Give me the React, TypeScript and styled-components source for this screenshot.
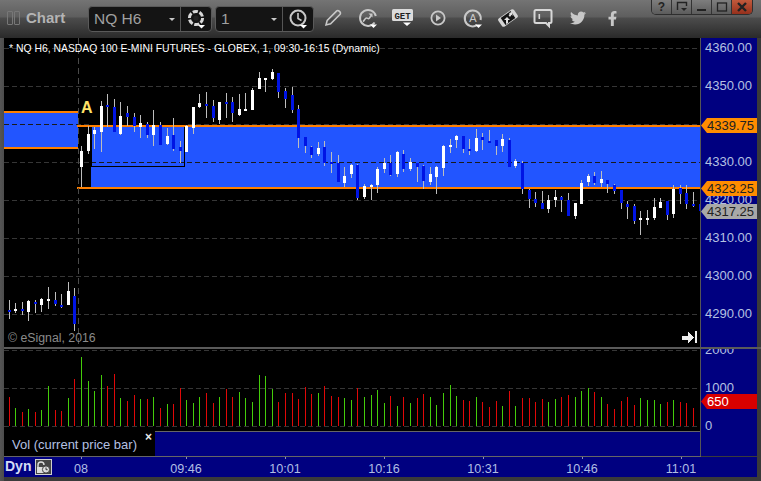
import React from "react";
import styled, { createGlobalStyle } from "styled-components";
import { FaTwitter, FaFacebookF } from "react-icons/fa";

const Global = createGlobalStyle`
  html, body { margin: 0; padding: 0; background: #3a3a3a; overflow: hidden; }
  * { box-sizing: border-box; }
`;

const Root = styled.div`
  width: 761px; height: 481px; display: flex; flex-direction: column;
  background: linear-gradient(90deg, #555 0, #4c4c4c 4px, #3a3a3a 4px);
  font-family: "Liberation Sans", Arial, sans-serif; overflow: hidden;
`;
const Toolbar = styled.div`
  height: 38px; flex: none; display: flex; align-items: flex-start; padding: 6px 8px 0 7px;
  background: linear-gradient(180deg, #747474 0, #5e5e5e 17px, #4c4c4c 18px, #2a2a2a 38px);
`;
const Grip = styled.div`
  width: 6px; height: 14px; margin: 5px 1px 0 0; border: 1px solid #777; border-radius: 1px;
`;
const Title = styled.div`
  width: 62px; margin-left: 5px; margin-top: 3px; color: #b4b4b4; font-size: 15px; font-weight: 700; line-height: 18px;
`;
const Combo = styled.div<{ $w: number; $left: number }>`
  width: ${p => p.$w}px; height: 26px; flex: none; margin-left: ${p => p.$left}px; display: flex; align-items: center;
  background: #141414; border: 1px solid #5a5a5a; border-radius: 4px;
`;
const ComboText = styled.div`
  flex: 1; padding-left: 5px; color: #a0a0a0; font-size: 15.5px; line-height: 24px;
`;
const Caret = styled.div`
  width: 0; height: 0; margin-right: 5px; border-left: 3px solid transparent; border-right: 3px solid transparent; border-top: 3px solid #c8c8c8;
`;
const ComboIcon = styled.div`
  width: 31px; height: 24px; flex: none; border-left: 1px solid #555; display: flex; align-items: center; justify-content: center; padding-left: 1px;
`;
const Tools = styled.div`
  display: flex; margin-left: 1px; margin-top: 0;
`;
const Tool = styled.div`
  width: 35px; height: 24px; display: flex; align-items: center; justify-content: center; color: #c8c8c8;
`;
const WinButtons = styled.div`
  margin-left: auto; margin-top: -6px; display: flex; height: 15px; border: 1px solid #2e2e2e; border-top: 0; border-radius: 0 0 5px 5px; overflow: hidden;
`;
const WinButton = styled.div<{ $close?: boolean }>`
  width: 20px; display: flex; align-items: center; justify-content: center; color: #222; font-size: 12px; font-weight: 700;
  background: ${p => p.$close ? "linear-gradient(180deg,#c25a3c,#96301c)" : "linear-gradient(180deg,#7e7e7e,#5c5c5c)"};
  border-right: 1px solid #333;
  &:last-child { border-right: 0; }
`;
const Main = styled.div`
  flex: 1; display: flex; flex-direction: column; padding: 0 4px 4px 4px; min-height: 0;
`;
const Row = styled.div<{ $h: number }>`
  height: ${p => p.$h}px; flex: none; display: flex;
`;
const ChartPane = styled.div`
  width: 696px; height: 309px; flex: none; position: relative; background: #000; overflow: hidden;
  svg { display: block; }
`;
const ChartTitle = styled.div`
  position: absolute; left: 5px; top: 4px; color: #fff; font-size: 10.4px; line-height: 13px; white-space: nowrap;
`;
const Copyright = styled.div`
  position: absolute; left: 4px; top: 293px; color: #8a8a8a; font-size: 12.3px; line-height: 14px; white-space: nowrap;
`;
const Axis = styled.div<{ $top: number }>`
  flex: 1; background: #000080; border-left: 1px solid #555; position: relative; overflow: hidden; padding: ${p => Math.max(p.$top, 0)}px 0 0 4px;
  display: flex; flex-direction: column; gap: 18px;
  & > :first-child { margin-top: ${p => Math.min(p.$top, 0)}px; }
`;
const AxisTick = styled.div`
  height: 20px; flex: none; line-height: 20px; color: #b4c0e2; font-size: 13px; white-space: nowrap;
`;
const Badge = styled.div<{ $top: number; $bg: string; $fg: string }>`
  position: absolute; left: 0; top: ${p => p.$top}px; height: 15px; right: 0; padding-left: 6px; line-height: 15px;
  color: ${p => p.$fg}; font-size: 13px; background: ${p => p.$bg};
  clip-path: polygon(0 50%, 6px 0, 100% 0, 100% 100%, 6px 100%);
`;
const Separator = styled.div`
  height: 2px; flex: none; background: #5a5a5a; margin-right: -4px;
`;
const VolColumn = styled.div`
  width: 696px; flex: none; display: flex; flex-direction: column; background: #000;
  svg { display: block; }
`;
const Legend = styled.div`
  height: 25px; flex: none; display: flex;
`;
const LegendLabel = styled.div`
  width: 151px; flex: none; position: relative; padding-left: 8px; color: #b4c0e2; font-size: 13px; line-height: 28px; white-space: nowrap;
`;
const LegendClose = styled.span`
  position: absolute; right: 3px; top: 0; color: #e8e8e8; font-size: 12px; font-weight: 700; line-height: 12px;
`;
const LegendFill = styled.div`
  flex: 1; background: #000080; border-top: 1px solid #666;
`;
const TimeRule = styled.div`
  width: 697px; height: 1px; flex: none; background: #666;
`;
const TimeRow = styled.div`
  flex: 1; display: flex; background: #000080; overflow: hidden;
`;
const Dyn = styled.div`
  width: 48px; flex: none; display: flex; align-items: flex-start; padding: 1px 0 0 1px; gap: 4px;
  color: #d4dcf4; font-size: 14px; font-weight: 700; line-height: 16px;
`;
const LockBox = styled.div`
  width: 17px; height: 16px; margin-top: 1px; flex: none; background: #444; border: 1px solid #cfcfcf; display: flex; align-items: center; justify-content: center;
`;
const TimeTick = styled.div<{ $w?: number; $ml?: number }>`
  width: ${p => p.$w ?? 99}px; margin-left: ${p => p.$ml ?? 0}px; flex: none; position: relative; text-align: center;
  color: #b0bee4; font-size: 12.6px; line-height: 22px; padding-top: 1px;
  &::before { content: ""; position: absolute; left: 50%; top: 0; width: 1px; height: 2px; background: #8a8fb8; }
`;

type C = [number, number, number, number, number, 0 | 1];
const A: C[] = [[244,258,273,321,382,1],[265,197,222,273,282,1],[283,200,210,222,267,1],[304,123,138,216,276,1],[322,102,135,141,201,0],[343,117,141,216,216,0],[361,126,168,222,225,1],[382,138,159,171,198,0],[403,159,171,198,216,0],[421,165,189,201,234,1],[442,186,192,225,234,0],[460,150,195,225,258,1],[481,186,195,255,255,0],[502,204,228,252,255,1],[520,174,225,267,273,0],[541,243,261,273,309,0],[559,195,198,276,276,1],[580,141,141,204,222,1],[598,102,129,141,144,1],[619,96,132,138,174,0],[640,120,138,174,186,0],[658,126,126,180,192,1],[679,99,126,132,174,0],[697,111,126,159,186,0],[718,102,147,165,168,1],[736,99,147,153,153,1]];
const B: C[] = [[7,84,90,150,150,1],[28,36,54,87,87,1],[46,54,54,60,96,1],[67,27,36,57,60,1],[85,39,39,96,114,0],[106,84,93,117,144,0],[127,81,105,150,159,0],[145,135,147,234,264,0],[166,231,231,258,279,0],[184,258,261,285,294,0],[205,246,264,282,288,1],[223,243,261,309,318,0],[244,276,306,312,339,0],[265,285,309,366,366,0],[283,321,348,369,381,1],[304,312,315,342,354,1],[322,312,315,414,420,0],[343,372,378,411,417,1],[364,372,375,381,420,1],[382,321,327,375,399,1],[403,294,309,327,339,1],[421,285,309,345,348,0],[442,273,276,342,351,1],[460,270,282,327,336,0],[481,294,306,327,333,1],[502,309,309,321,366,0],[520,315,318,363,387,0],[541,321,342,366,375,1],[559,318,321,351,402,1],[580,255,258,324,348,1],[601,237,255,261,279,1],[619,225,228,240,264,1],[640,228,228,267,279,0],[658,237,267,273,285,0],[679,207,234,273,276,1],[697,219,231,240,270,0],[718,210,243,249,249,0],[739,240,240,258,285,0]];
const D: C[] = [[7,72,87,108,126,1],[28,84,90,171,171,0],[46,147,153,168,174,1],[67,153,159,237,252,0],[88,237,240,267,294,0],[106,246,267,279,291,0],[127,243,279,297,297,0],[145,255,270,297,309,1],[166,240,261,270,291,1],[184,258,261,270,306,0],[205,249,270,318,318,0],[226,279,279,318,327,1],[244,210,219,282,282,1],[265,192,198,216,228,1],[283,186,198,219,225,0],[304,183,207,219,231,1],[322,210,210,222,249,0],[343,222,225,243,252,0],[364,240,240,279,297,0],[382,273,282,291,327,0],[403,282,288,333,342,0],[421,303,324,330,375,1],[442,300,324,330,345,1],[463,264,291,324,330,1],[481,264,276,294,294,1],[502,273,273,315,330,0],[520,225,237,312,324,1],[541,225,234,251,282,0],[559,225,249,282,297,0],[580,246,282,288,291,0],[601,282,282,303,303,0]];
const E: C[] = [[28,90,120,126,147,0],[46,99,117,123,129,1],[67,96,117,123,135,0],[85,90,93,126,153,1],[106,90,96,102,129,0],[124,84,87,105,126,1],[145,51,87,93,117,1],[166,66,90,102,108,0],[184,72,105,111,114,0],[205,36,63,105,105,1],[223,54,78,162,183,0]];

const candles = [
  ...E.map(c => ({ c, x0: 0, y0: 270 })),
  ...A.map(c => ({ c, x0: 0, y0: 60 })),
  ...B.map(c => ({ c, x0: 250, y0: 60 })),
  ...D.map(c => ({ c, x0: 500, y0: 110 })),
];

type V = [number, number, 0 | 1];
const V1: V[] = [[28,156,0],[46,189,1],[67,201,0],[85,192,1],[106,201,0],[124,195,1],[145,123,1],[166,195,0],[184,198,0],[205,159,1],[223,102,0],[244,36,1],[265,108,1],[283,138,1],[304,90,1],[322,123,0],[343,87,0],[361,159,1],[382,168,0],[403,150,0],[421,162,1],[442,162,0],[460,156,1],[481,189,0],[502,177,1],[520,177,0],[541,129,0],[559,165,1],[580,174,1],[598,156,1],[619,144,0],[640,174,0],[658,156,1],[679,132,0],[697,156,0],[718,141,1],[736,159,1],[757,171,1],[778,90,1]];
const V2: V[] = [[16,93,1],[37,132,1],[55,171,0],[76,144,0],[97,144,0],[115,162,0],[136,126,0],[154,147,0],[175,144,1],[193,123,0],[214,153,0],[235,156,0],[253,159,1],[274,165,1],[292,129,0],[313,156,1],[334,150,1],[352,135,1],[373,174,1],[391,153,0],[412,183,1],[430,156,0],[451,174,1],[472,159,0],[490,147,0],[511,156,1],[529,180,1],[550,144,1],[571,120,1],[589,153,1],[610,165,0],[628,168,0],[649,156,1],[667,171,0],[688,186,0],[709,168,0],[727,183,1],[748,138,0]];
const V3: V[] = [[16,258,1],[37,234,0],[58,234,0],[76,246,0],[97,237,0],[115,246,1],[136,237,1],[154,231,0],[175,225,0],[196,231,1],[214,213,1],[235,204,1],[253,216,0],[274,231,1],[292,252,0],[313,267,0],[334,243,0],[352,231,0],[373,255,0],[391,234,1],[412,240,1],[433,240,1],[451,252,1],[472,246,0],[490,240,1],[511,246,0],[529,249,0],[550,264,0]];
const vols = [
  ...V1.map(v => ({ v, x0: 0, y0: 345 })),
  ...V2.map(v => ({ v, x0: 260, y0: 345 })),
  ...V3.map(v => ({ v, x0: 510, y0: 320 })),
];

const GRID = [48, 86, 124, 162, 200, 238, 276, 314];

const Chart = () => (
  <svg width={696} height={309} viewBox="4 38 696 309" shapeRendering="crispEdges">
    {GRID.map(y => <line key={y} x1={4} x2={700} y1={y + 0.5} y2={y + 0.5} stroke="#363636" strokeDasharray="5 3" />)}
    <rect x={4} y={111} width={74} height={38} fill="#2255ff" />
    <rect x={91} y={125} width={609} height={64} fill="#2255ff" />
    <line x1={4} x2={78} y1={124.5} y2={124.5} stroke="#1a1a1a" strokeDasharray="5 3" />
    <line x1={91} x2={700} y1={162.5} y2={162.5} stroke="#1a1a1a" strokeDasharray="5 3" />
    <rect x={91.5} y={124.5} width={93} height={42} fill="none" stroke="#000" />
    <rect x={4} y={111} width={74} height={2} fill="#ff8000" />
    <rect x={4} y={147} width={74} height={2} fill="#ff8000" />
    <rect x={77} y={125} width={623} height={2} fill="#ff8000" />
    <rect x={77} y={187} width={623} height={2} fill="#ff8000" />
    <line x1={78.5} x2={78.5} y1={38} y2={347} stroke="#4a4a4a" strokeDasharray="6 4" />
    {candles.map(({ c, x0, y0 }, i) => {
      const x = x0 + Math.round((c[0] - 1) / 3);
      const y = (z: number) => y0 + z / 3;
      return (
        <g key={i}>
          <rect x={x} y={y(c[1])} width={1} height={(c[4] - c[1]) / 3} fill="#bdbdbd" />
          <rect x={x - 1} y={y(c[2])} width={3} height={(c[3] - c[2]) / 3} fill={c[5] ? "#ffffff" : "#0014e4"} />
        </g>
      );
    })}
    <text x={81} y={113} fill="#ffe268" fontSize={16} fontWeight={700} fontFamily="Liberation Sans" shapeRendering="auto">A</text>
    <path d="M682 335.5h6v-4l6 6-6 6v-4h-6z" fill="#eee" />
    <rect x={695} y={331} width={2} height={12} fill="#eee" />
  </svg>
);

const Volume = () => (
  <svg width={696} height={82} viewBox="4 349 696 82" shapeRendering="crispEdges">
    {[350, 388, 426].map(y => <line key={y} x1={4} x2={700} y1={y + 0.5} y2={y + 0.5} stroke="#363636" strokeDasharray="5 3" />)}
    {vols.map(({ v, x0, y0 }, i) => {
      const top = Math.round(y0 + v[1] / 3);
      return <rect key={i} x={x0 + Math.round((v[0] - 1) / 3)} y={top} width={1} height={426 - top} fill={v[2] ? "#44cc0a" : "#e00808"} />;
    })}
  </svg>
);

const I = { stroke: "#c8c8c8", fill: "none" };
const SmallCaret = ({ x, y }: { x: number; y: number }) => <path d={`M${x} ${y}h7l-3.5 3.5z`} fill="#fff" />;

const GearIcon = () => (
  <svg width={22} height={22} viewBox="0 0 22 22">
    <circle cx={10} cy={10} r={6.6} {...I} stroke="#d8d8d8" strokeWidth={3} strokeDasharray="5.2 1.7" />
    <circle cx={10} cy={10} r={2.6} fill="#222" />
    <SmallCaret x={12} y={17} />
  </svg>
);
const ClockIcon = () => (
  <svg width={22} height={22} viewBox="0 0 22 22">
    <circle cx={10} cy={10} r={7.5} {...I} strokeWidth={2} />
    <path d="M10 5v5.5l3.5 2" {...I} strokeWidth={1.6} />
    <SmallCaret x={12} y={17} />
  </svg>
);
const PencilIcon = () => (
  <svg width={20} height={20} viewBox="0 0 20 20">
    <path d="M3 17l1.2-4.6L13.5 3.1a1.8 1.8 0 0 1 2.6 0l.8.8a1.8 1.8 0 0 1 0 2.6L7.6 15.8z" {...I} strokeWidth={1.6} />
  </svg>
);
const RefreshIcon = () => (
  <svg width={24} height={24} viewBox="0 0 24 24">
    <path d="M18.6 16.5A8 8 0 1 1 19.8 10" {...I} strokeWidth={2} />
    <path d="M7 15.5c1.5-1 2-3.5 3.5-3.5s1.5 1.5 3 0l2-3" {...I} strokeWidth={1.6} />
    <path d="M12.5 7.5h4v4z" fill="#c8c8c8" />
    <SmallCaret x={14} y={18.5} />
  </svg>
);
const GetIcon = () => (
  <svg width={26} height={22} viewBox="0 0 26 22">
    <rect x={2} y={2} width={21} height={12} rx={1.5} fill="#dcdcdc" />
    <text x={12.5} y={11.5} textAnchor="middle" fontSize={9} fontWeight={700} fontFamily="Liberation Mono" fill="#222">GET</text>
    <path d="M13 15.5h8l-4 3.5z" fill="#fff" />
  </svg>
);
const PlayIcon = () => (
  <svg width={20} height={20} viewBox="0 0 20 20">
    <circle cx={10} cy={10} r={6.6} {...I} strokeWidth={1.8} />
    <path d="M8 6.5l5 3.5-5 3.5z" fill="#c8c8c8" />
  </svg>
);
const AlertIcon = () => (
  <svg width={24} height={24} viewBox="0 0 24 24">
    <path d="M16 19.2A8 8 0 1 1 19.6 14" {...I} strokeWidth={2} />
    <text x={12} y={16} textAnchor="middle" fontSize={11} fontFamily="Liberation Sans" fill="#c8c8c8">A</text>
    <SmallCaret x={14} y={18.5} />
  </svg>
);
const SwapIcon = () => (
  <svg width={22} height={22} viewBox="0 0 22 22">
    <g transform="rotate(-35 11 11)">
      <rect x={1.5} y={6} width={19} height={10} rx={2} fill="#d4d4d4" />
      <rect x={5} y={6.8} width={12} height={8.4} fill="#141414" />
    </g>
    <path d="M9 17v-4H7l3-3 3 3h-2v3zM12 6l3-1 .5 4-1-1.2L13 10l-1.5-2 1.2-.8z" fill="#e4e4e4" />
  </svg>
);
const ChatIcon = () => (
  <svg width={22} height={22} viewBox="0 0 22 22">
    <path d="M4 3h14a1.5 1.5 0 0 1 1.5 1.5v10A1.5 1.5 0 0 1 18 16h-1v3l-3-3H4a1.5 1.5 0 0 1-1.5-1.5v-10A1.5 1.5 0 0 1 4 3z" {...I} stroke="#d8d8d8" strokeWidth={2} />
    <rect x={6.5} y={7} width={1.6} height={5} fill="#d8d8d8" />
  </svg>
);
const LockIcon = () => (
  <svg width={15} height={14} viewBox="0 0 15 14">
    <path d="M2 8V5a3 3 0 0 1 6 0" fill="none" stroke="#ddd" strokeWidth={1.4} />
    <rect x={1} y={7} width={7} height={6} fill="#ddd" />
    <circle cx={10} cy={9.5} r={3.6} fill="#ddd" stroke="#444" />
    <path d="M10 7.5v2.2h1.6" fill="none" stroke="#333" />
  </svg>
);

export default function App() {
  return (
    <Root>
      <Global />
      <Toolbar>
        <Grip />
        <Grip />
        <Title>Chart</Title>
        <Combo $w={124} $left={0}>
          <ComboText>NQ H6</ComboText>
          <Caret />
          <ComboIcon><GearIcon /></ComboIcon>
        </Combo>
        <Combo $w={99} $left={3}>
          <ComboText>1</ComboText>
          <Caret />
          <ComboIcon><ClockIcon /></ComboIcon>
        </Combo>
        <Tools>
          <Tool><PencilIcon /></Tool>
          <Tool><RefreshIcon /></Tool>
          <Tool><GetIcon /></Tool>
          <Tool><PlayIcon /></Tool>
          <Tool><AlertIcon /></Tool>
          <Tool><SwapIcon /></Tool>
          <Tool><ChatIcon /></Tool>
          <Tool><FaTwitter size={16} /></Tool>
          <Tool><FaFacebookF size={15} /></Tool>
        </Tools>
        <WinButtons>
          <WinButton>?</WinButton>
          <WinButton>
            <svg width={12} height={12} viewBox="0 0 12 12"><path d="M1.5 9V1.5h9V5" fill="none" stroke="#222" strokeWidth={1.4} /><path d="M5 7h6l-3 3z" fill="#222" /></svg>
          </WinButton>
          <WinButton>
            <svg width={12} height={12} viewBox="0 0 12 12"><rect x={1} y={8} width={9} height={2} fill="#222" /></svg>
          </WinButton>
          <WinButton>
            <svg width={12} height={12} viewBox="0 0 12 12"><rect x={1.5} y={2} width={9} height={8} fill="none" stroke="#222" strokeWidth={1.3} /></svg>
          </WinButton>
          <WinButton $close>
            <svg width={12} height={12} viewBox="0 0 12 12"><path d="M2 2l8 8M10 2l-8 8" stroke="#222" strokeWidth={2.4} /></svg>
          </WinButton>
        </WinButtons>
      </Toolbar>
      <Main>
        <Row $h={309}>
          <ChartPane>
            <Chart />
            <ChartTitle>* NQ H6, NASDAQ 100 E-MINI FUTURES - GLOBEX, 1, 09:30-16:15 (Dynamic)</ChartTitle>
            <Copyright>© eSignal, 2016</Copyright>
          </ChartPane>
          <Axis $top={0}>
            {["4360.00", "4350.00", "4340.00", "4330.00", "4320.00", "4310.00", "4300.00", "4290.00"].map(t => <AxisTick key={t}>{t}</AxisTick>)}
            <Badge $top={80} $bg="#ff8c00" $fg="#222">4339.75</Badge>
            <Badge $top={143} $bg="#ff8c00" $fg="#222">4323.25</Badge>
            <Badge $top={166} $bg="#a8a8a8" $fg="#222">4317.25</Badge>
          </Axis>
        </Row>
        <Separator />
        <Row $h={107}>
          <VolColumn>
            <Volume />
            <Legend>
              <LegendLabel>
                Vol (current price bar)
                <LegendClose>×</LegendClose>
              </LegendLabel>
              <LegendFill />
            </Legend>
          </VolColumn>
          <Axis $top={-9}>
            {["2000", "1000", "0"].map(t => <AxisTick key={t}>{t}</AxisTick>)}
            <Badge $top={45} $bg="#d80000" $fg="#fff">650</Badge>
          </Axis>
        </Row>
        <TimeRule />
        <TimeRow>
          <Dyn>
            Dyn
            <LockBox><LockIcon /></LockBox>
          </Dyn>
          <TimeTick $w={40} $ml={9}>08</TimeTick>
          <TimeTick $ml={35.5}>09:46</TimeTick>
          <TimeTick>10:01</TimeTick>
          <TimeTick>10:16</TimeTick>
          <TimeTick>10:31</TimeTick>
          <TimeTick>10:46</TimeTick>
          <TimeTick>11:01</TimeTick>
        </TimeRow>
      </Main>
    </Root>
  );
}
